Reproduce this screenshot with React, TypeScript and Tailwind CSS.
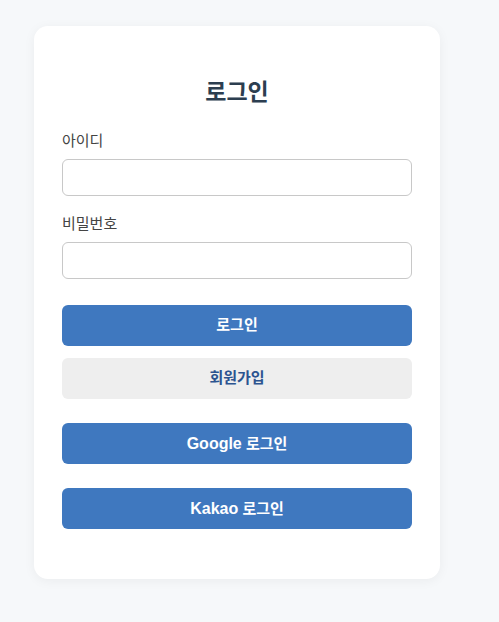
import React from 'react';

interface FieldProps {
  id: string;
  label: string;
  type: string;
}

const Field: React.FC<FieldProps> = ({ id, label, type }) => (
  <div className="mb-[18px]">
    <label htmlFor={id} className="block mb-2 text-[15px] leading-5 text-[#444444]">
      {label}
    </label>
    <input
      id={id}
      name={id}
      type={type}
      className="block w-full h-[37px] px-2.5 text-[15px] bg-white border border-[#c8c8c8] rounded-md"
    />
  </div>
);

const buttonBase = 'block w-full h-[41px] rounded-md text-[15px] font-bold cursor-pointer';
const primary = 'bg-[#3f78bf] text-white';
const secondary = 'bg-[#eeeeee] text-[#2c5490]';

const SocialButton: React.FC<{ provider: string }> = ({ provider }) => (
  <button type="button" className={`${buttonBase} ${primary} mt-6`}>
    <span className="text-base">{provider}</span> 로그인
  </button>
);

const App: React.FC = () => {
  return (
    <div className="min-h-screen bg-[#f6f8fa] pt-[26px] pb-10 pl-[34px] pr-[59px] font-['Liberation_Sans','Noto_Sans_CJK_KR',sans-serif]">
      <main className="bg-white rounded-[14px] shadow-[0_2px_12px_rgba(0,0,0,0.05)] px-7 py-[50px]">
        <h1 className="mb-[23px] text-[23px] leading-8 font-bold text-center text-[#2c3e50]">로그인</h1>
        <form onSubmit={(e) => e.preventDefault()}>
          <Field id="username" label="아이디" type="text" />
          <Field id="password" label="비밀번호" type="password" />
          <button type="submit" className={`${buttonBase} ${primary} mt-[26px]`}>로그인</button>
          <button type="button" className={`${buttonBase} ${secondary} mt-3`}>회원가입</button>
          <SocialButton provider="Google" />
          <SocialButton provider="Kakao" />
        </form>
      </main>
    </div>
  );
};

export default App;
